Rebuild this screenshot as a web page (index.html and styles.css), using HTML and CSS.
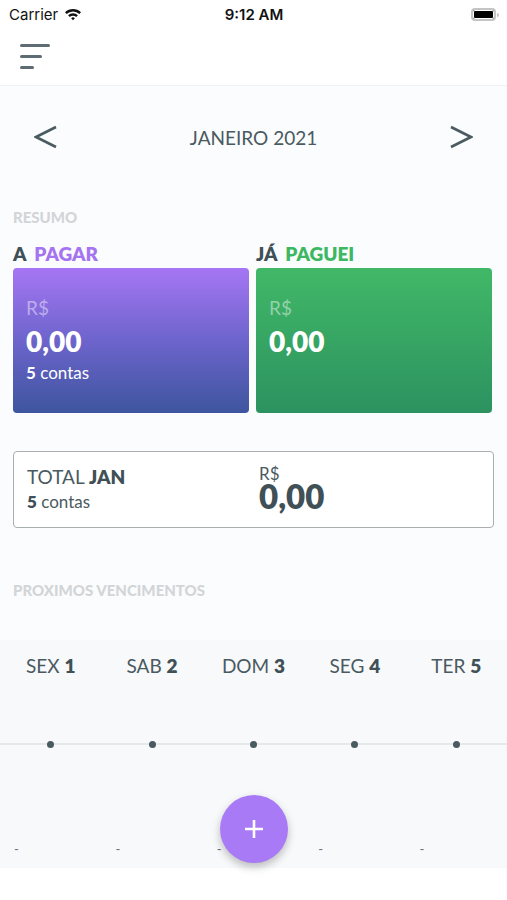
FILE: index.html
```html
<!DOCTYPE html>
<html lang="pt-BR">
<head>
  <meta charset="UTF-8">
  <title>Contas</title>
  <meta name="viewport" content="width=device-width, initial-scale=1.0">
  <link rel="stylesheet" href="styles.css">
</head>
<body>

<!-- Status bar -->
<div class="status-bar">
  <div class="carrier">
    Carrier
    <svg class="wifi" width="18" height="14" viewBox="0 0 18 14">
      <path d="M1 5.2a11.5 11.5 0 0 1 16 0l-1.7 1.8a9 9 0 0 0-12.6 0z" fill="#111"/>
      <path d="M4.1 8.3a7 7 0 0 1 9.8 0l-1.7 1.8a4.6 4.6 0 0 0-6.4 0z" fill="#111"/>
      <path d="M7.1 11.3a2.7 2.7 0 0 1 3.8 0L9 13.3z" fill="#111"/>
    </svg>
  </div>
  <div class="clock">9:12 AM</div>
  <div class="battery"><span class="battery-level"></span></div>
</div>

<!-- Header -->
<div class="header">
  <div class="menu-icon">
    <span class="bar-long"></span>
    <span class="bar-mid"></span>
    <span class="bar-short"></span>
  </div>
</div>

<div class="content">
  <div class="month-nav">
    <svg class="arrow" width="24" height="26" viewBox="0 0 24 26">
      <polyline points="22,3 2,13 22,23" fill="none" stroke="#4a5a61" stroke-width="2.6"/>
    </svg>
    <span class="month">JANEIRO 2021</span>
    <svg class="arrow" width="24" height="26" viewBox="0 0 24 26">
      <polyline points="2,3 22,13 2,23" fill="none" stroke="#4a5a61" stroke-width="2.6"/>
    </svg>
  </div>

  <div class="section">
    <div class="section-label">RESUMO</div>
    <div class="summary">
      <div>
        <div class="card-title">A <span class="purple">PAGAR</span></div>
        <div class="card card-pay">
          <div class="currency">R$</div>
          <div class="amount">0,00</div>
          <div class="count"><b>5</b> contas</div>
        </div>
      </div>
      <div>
        <div class="card-title">JÁ <span class="green">PAGUEI</span></div>
        <div class="card card-paid">
          <div class="currency">R$</div>
          <div class="amount">0,00</div>
        </div>
      </div>
    </div>

    <div class="total-box">
      <div>
        <div class="total-title">TOTAL <b>JAN</b></div>
        <div class="total-count"><b>5</b> contas</div>
      </div>
      <div>
        <div class="total-currency">R$</div>
        <div class="total-amount">0,00</div>
      </div>
    </div>

    <div class="section-label next-label">PROXIMOS VENCIMENTOS</div>
  </div>

  <div class="upcoming">
    <div class="days">
      <div class="day">SEX <b>1</b></div>
      <div class="day">SAB <b>2</b></div>
      <div class="day">DOM <b>3</b></div>
      <div class="day">SEG <b>4</b></div>
      <div class="day">TER <b>5</b></div>
    </div>
    <div class="timeline">
      <span class="dot"></span>
      <span class="dot"></span>
      <span class="dot"></span>
      <span class="dot"></span>
      <span class="dot"></span>
    </div>
    <div class="dashes">
      <span>-</span>
      <span>-</span>
      <span>-</span>
      <span>-</span>
      <span>-</span>
    </div>
  </div>
</div>

<button class="fab">
  <svg width="20" height="20" viewBox="0 0 20 20">
    <path d="M10 1v18M1 10h18" stroke="#fff" stroke-width="2.6"/>
  </svg>
</button>

</body>
</html>
```

FILE: styles.css
```css
body {
  margin: 0;
  font-family: Lato, "Open Sans", sans-serif;
  background-color: #ffffff;
  color: #4a5a61;
  width: 507px;
  height: 900px;
  overflow: hidden;
  position: relative;
}

.status-bar {
  height: 28px;
  display: flex;
  align-items: center;
  justify-content: space-between;
  padding: 0 8px 0 9px;
  font-family: Inter, Roboto, sans-serif;
  font-size: 15px;
  color: #111;
}

.carrier {
  display: flex;
  align-items: center;
  gap: 6px;
  width: 120px;
}

.clock {
  font-weight: 600;
}

.battery {
  width: 120px;
  display: flex;
  justify-content: flex-end;
  position: relative;
}

.battery-level {
  display: block;
  width: 21px;
  height: 9px;
  border: 2px solid #c4c4c4;
  border-radius: 4px;
  background-color: #000;
  box-shadow: inset 0 0 0 1px #fff;
  margin-right: 3px;
}

.battery::after {
  content: "";
  position: absolute;
  right: 0;
  top: 5px;
  width: 2px;
  height: 4px;
  background-color: #c4c4c4;
  border-radius: 0 2px 2px 0;
}

.header {
  height: 57px;
  border-bottom: 1px solid #f0f1f3;
  display: flex;
  align-items: center;
  padding-left: 20px;
}

.menu-icon span {
  display: block;
  height: 3px;
  border-radius: 2px;
  background-color: #5d6b72;
  margin-bottom: 8px;
}

.menu-icon .bar-long { width: 30px; }
.menu-icon .bar-mid { width: 22px; }
.menu-icon .bar-short { width: 14px; margin-bottom: 0; }

.content {
  background-color: #fbfcfd;
}

.month-nav {
  height: 102px;
  display: flex;
  align-items: center;
  justify-content: space-between;
  padding: 0 34px 0 34px;
}

.month {
  font-size: 19px;
  color: #4a5a61;
}

.section {
  padding: 0 13px;
}

.section-label {
  font-size: 15px;
  font-weight: 900;
  line-height: 16px;
  color: #d2d5d8;
  margin-top: 21px;
}

.summary {
  display: grid;
  grid-template-columns: 236px 236px;
  gap: 7px;
  margin-top: 18px;
}

.card-title {
  font-size: 19px;
  font-weight: 800;
  line-height: 22px;
  color: #3f5057;
}

.purple { color: #a574f1; margin-left: 4px; }
.green { color: #3cb862; margin-left: 4px; }

.card {
  margin-top: 3px;
  height: 145px;
  border-radius: 4px;
  padding: 28px 13px 0;
  box-sizing: border-box;
  color: #ffffff;
}

.card-pay {
  background: linear-gradient(180deg, #a676f4 0%, #6d64cc 50%, #3d559e 100%);
}

.card-paid {
  background: linear-gradient(180deg, #41b867 0%, #2c9260 100%);
}

.currency {
  font-size: 19px;
  line-height: 24px;
  color: rgba(255, 255, 255, 0.45);
}

.amount {
  font-size: 28px;
  font-weight: 800;
  line-height: 32px;
  margin-top: 5px;
}

.count {
  font-size: 17px;
  line-height: 22px;
  margin-top: 5px;
}

.total-box {
  margin-top: 38px;
  height: 77px;
  box-sizing: border-box;
  border: 1px solid #a9aeb1;
  border-radius: 4px;
  background-color: #ffffff;
  display: grid;
  grid-template-columns: 232px 1fr;
  padding: 13px 0 0 13px;
}

.total-title {
  font-size: 19px;
  line-height: 24px;
  color: #4a5a61;
}

.total-title b, .total-count b { color: #3f5057; font-weight: 800; }

.total-count {
  font-size: 17px;
  line-height: 26px;
}

.total-currency {
  font-size: 17px;
  line-height: 17px;
}

.total-amount {
  font-size: 33px;
  font-weight: 800;
  line-height: 28px;
  color: #3f5057;
}

.next-label {
  margin-top: 54px;
}

.upcoming {
  margin-top: 42px;
  height: 228px;
  background-color: #f8f9fb;
}

.days, .timeline, .dashes {
  display: grid;
  grid-template-columns: repeat(5, 1fr);
}

.days {
  padding-top: 14px;
}

.day {
  text-align: center;
  font-size: 19px;
  line-height: 24px;
  color: #4a5a61;
}

.day b { color: #3f5057; font-weight: 800; }

.timeline {
  margin-top: 60px;
  height: 12px;
  background: linear-gradient(#f8f9fb 5px, #e6e9ec 5px, #e6e9ec 7px, #f8f9fb 7px);
  justify-items: center;
  align-items: center;
}

.dot {
  width: 7px;
  height: 7px;
  border-radius: 50%;
  background-color: #4a5a61;
}

.dashes {
  margin-top: 92px;
  font-size: 13px;
  line-height: 14px;
  color: #6c7479;
}

.dashes span {
  padding-left: 14px;
}

.fab {
  position: absolute;
  left: 220px;
  top: 795px;
  width: 68px;
  height: 68px;
  border-radius: 50%;
  border: none;
  background-color: #a87af5;
  padding: 0;
  display: flex;
  align-items: center;
  justify-content: center;
  box-shadow: 0 4px 8px rgba(0, 0, 0, 0.25);
}
```
